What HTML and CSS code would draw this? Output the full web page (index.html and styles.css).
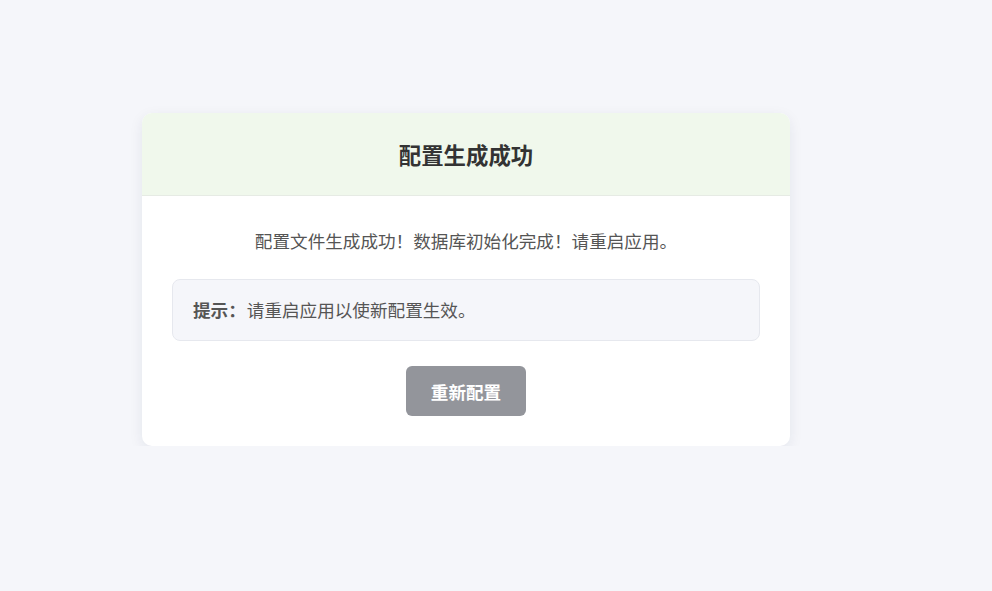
FILE: index.html
```html
<!DOCTYPE html>
<html lang="zh-CN">
<head>
    <meta charset="UTF-8">
    <meta name="viewport" content="width=device-width, initial-scale=1.0">
    <title>配置生成成功</title>
    <link rel="stylesheet" href="styles.css">
</head>
<body>
    <div class="page">
        <div class="card">
            <div class="card-header">
                <h1>配置生成成功</h1>
            </div>
            <div class="card-body">
                <p class="message">配置文件生成成功！数据库初始化完成！请重启应用。</p>
                <div class="tip">
                    <strong>提示：</strong>请重启应用以使新配置生效。
                </div>
                <div class="actions">
                    <button class="btn-reset">重新配置</button>
                </div>
            </div>
        </div>
    </div>
</body>
</html>
```

FILE: styles.css
```css
body {
    margin: 0;
    background-color: #f5f6fa;
    font-family: "Noto Sans CJK SC", "Noto Sans", sans-serif;
    color: #555;
}

.page {
    padding: 113px 0 0 142px;
}

.card {
    width: 648px;
    background-color: #fff;
    border-radius: 10px;
    box-shadow: 0 4px 14px rgba(30, 40, 80, 0.08);
    overflow: hidden;
}

.card-header {
    background-color: #f0f8ec;
    border-bottom: 1px solid #e6ebe4;
    padding: 26px 0;
    text-align: center;
}

.card-header h1 {
    margin: 0;
    font-size: 22.4px;
    line-height: 30px;
    font-weight: bold;
    color: #333;
}

.card-body {
    padding: 30px;
}

.message {
    margin: 0 0 24px;
    text-align: center;
    font-size: 17.6px;
    line-height: 29px;
    color: #555;
}

.tip {
    background-color: #f5f6fa;
    border: 1px solid #e6e8ee;
    border-radius: 8px;
    padding: 16px 20px;
    font-size: 17.6px;
    line-height: 28px;
    color: #555;
}

.tip strong {
    color: #555;
    margin-right: 1px;
}

.actions {
    margin-top: 25px;
    text-align: center;
}

.btn-reset {
    width: 120px;
    height: 50px;
    background-color: #93959b;
    color: #fff;
    border: none;
    border-radius: 6px;
    font-family: inherit;
    font-size: 17.6px;
    font-weight: bold;
    cursor: pointer;
}
```
